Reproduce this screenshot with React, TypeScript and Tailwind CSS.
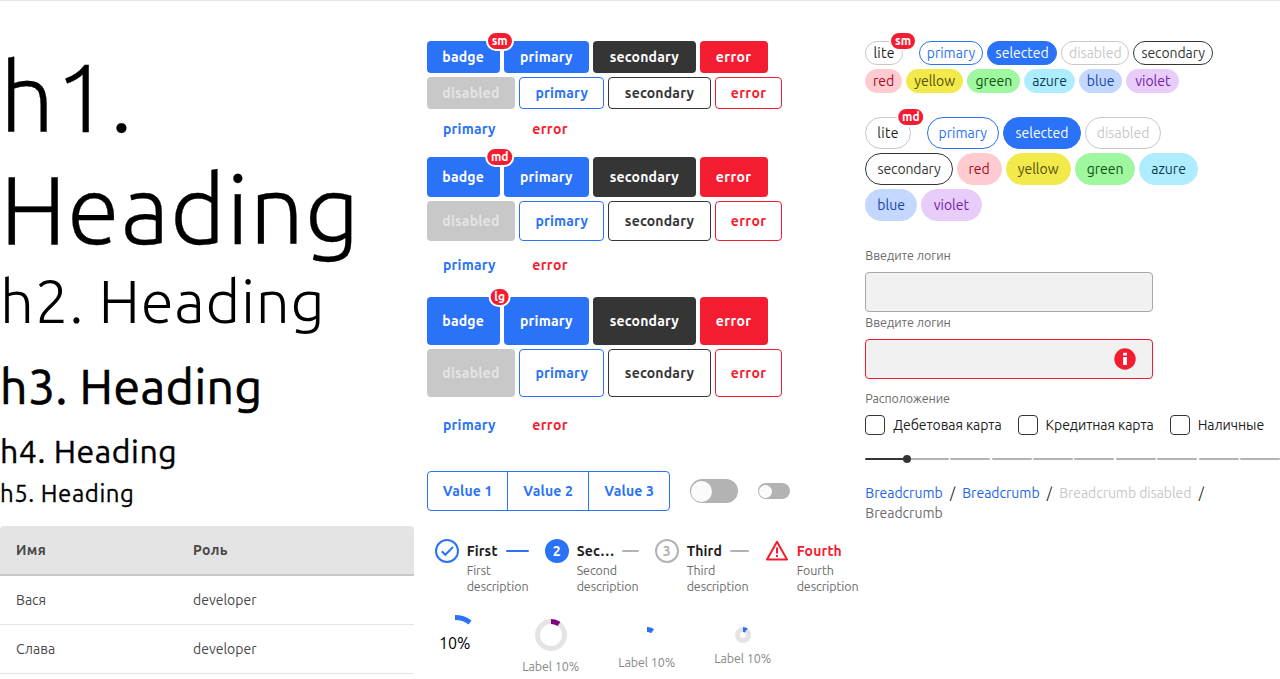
import type { ReactNode } from 'react';

const base = 'relative inline-flex items-center justify-center rounded font-bold';
const variants = {
  primary: 'bg-[#2a72f8] text-white',
  secondary: 'bg-[#353535] text-white',
  error: 'bg-[#f41c30] text-white tracking-[0.4px]',
  disabled: 'bg-[#c8c8c8] text-[#e4e4e4]',
  outlinePrimary: 'border border-[#2a72f8] text-[#2a72f8]',
  outlineSecondary: 'border border-[#353535] text-[#353535]',
  outlineError: 'border border-[#f41c30] text-[#f41c30] tracking-[0.4px]',
  linkPrimary: 'text-[#2a72f8]',
  linkError: 'text-[#f41c30] tracking-[0.4px]',
};

function Badge({ children, offset = 'top-0 left-full' }: { children: ReactNode; offset?: string }) {
  return (
    <span className={`absolute z-10 flex h-5 -translate-x-1/2 -translate-y-1/2 items-center rounded-full border-2 border-white bg-[#f41c30] px-1 text-xs leading-4 font-bold tracking-normal text-white ${offset}`}>
      {children}
    </span>
  );
}

function Button({ v, h, w, children, badge }: { v: keyof typeof variants; h: string; w: string; children: ReactNode; badge?: string }) {
  return (
    <button className={`${base} ${variants[v]} ${h} ${w}`}>
      {children}
      {badge && <Badge>{badge}</Badge>}
    </button>
  );
}

function ButtonSet({ h, badge }: { h: string; badge: string }) {
  return (
    <div className="flex flex-col gap-1 tracking-[0.2px]">
      <div className="flex gap-1">
        <Button v="primary" h={h} w="w-[73px]" badge={badge}>badge</Button>
        <Button v="primary" h={h} w="w-[85.4px]">primary</Button>
        <Button v="secondary" h={h} w="w-[102.6px]">secondary</Button>
        <Button v="error" h={h} w="w-[68px]">error</Button>
      </div>
      <div className="flex gap-1">
        <Button v="disabled" h={h} w="w-[88.6px]">disabled</Button>
        <Button v="outlinePrimary" h={h} w="w-[85px]">primary</Button>
        <Button v="outlineSecondary" h={h} w="w-[102.5px]">secondary</Button>
        <Button v="outlineError" h={h} w="w-[67.6px]">error</Button>
      </div>
      <div className="flex gap-1">
        <Button v="linkPrimary" h={h} w="w-[85.4px]">primary</Button>
        <Button v="linkError" h={h} w="w-[68px]">error</Button>
      </div>
    </div>
  );
}

const chips = [
  { name: 'lite', sm: 'w-[37.7px]', md: 'w-[45.5px]', color: 'border-[#c8c8c8] text-[#1d1d1d] tracking-[0.3px]' },
  { name: 'primary', sm: 'w-[64px]', md: 'w-[72px]', color: 'border-[#2a72f8] text-[#2a72f8]' },
  { name: 'selected', sm: 'w-[70.3px]', md: 'w-[78.3px]', color: 'border-[#2a72f8] bg-[#2a72f8] text-white' },
  { name: 'disabled', sm: 'w-[68px]', md: 'w-[76px]', color: 'border-[#c8c8c8] text-[#c8c8c8]' },
  { name: 'secondary', sm: 'w-[79.7px]', md: 'w-[87.5px]', color: 'border-[#353535] text-[#353535] tracking-[-0.1px]' },
  { name: 'red', sm: 'w-[36.7px]', md: 'w-[44.7px]', color: 'border-[#ffcad0] bg-[#ffcad0] text-[#a30b1a]' },
  { name: 'yellow', sm: 'w-[57.3px]', md: 'w-[65.3px]', color: 'border-[#f2e94a] bg-[#f2e94a] text-[#524e04]' },
  { name: 'green', sm: 'w-[53px]', md: 'w-[60.5px]', color: 'border-[#9ff79f] bg-[#9ff79f] text-[#0b520b]' },
  { name: 'azure', sm: 'w-[50.5px]', md: 'w-[58.5px]', color: 'border-[#aeecff] bg-[#aeecff] text-[#083c4b]' },
  { name: 'blue', sm: 'w-[43.7px]', md: 'w-[51.7px]', color: 'border-[#c3d7ff] bg-[#c3d7ff] text-[#1546a5]' },
  { name: 'violet', sm: 'w-[52.7px]', md: 'w-[60.7px]', color: 'border-[#e8ccfa] bg-[#e8ccfa] text-[#7221a7]' },
];

function Chips({ size }: { size: 'sm' | 'md' }) {
  return (
    <div className="flex w-[360px] flex-wrap gap-1">
      {chips.map((c) => (
        <span key={c.name} className={`relative inline-flex items-center justify-center rounded-full border ${size === 'sm' ? 'h-6' : 'h-8'} ${c[size]} ${c.color} ${c.name === 'lite' ? 'mr-3' : ''}`}>
          {c.name}
          {c.name === 'lite' && <Badge offset="-top-px left-[calc(100%+1px)]">{size}</Badge>}
        </span>
      ))}
    </div>
  );
}

function Step({ icon, title, text, line, color = 'text-[#1d1d1d]' }: { icon: ReactNode; title: string; text: string; line?: string; color?: string }) {
  return (
    <div className="flex gap-2">
      {icon}
      <div className="w-[62px]">
        <div className="flex h-6 items-center gap-2">
          <span className={`shrink-0 font-bold tracking-[0.15px] ${color}`}>{title}</span>
          {line && <span className={`h-0.5 min-w-4 flex-1 rounded-full ${line}`} />}
        </div>
        <p className="-mt-px text-[12.5px] leading-4 tracking-[-0.1px] text-[#6b6b6b]">{text}<br />description</p>
      </div>
    </div>
  );
}

function Ring({ size, color, track }: { size: number; color: string; track?: boolean }) {
  const r = size / 2 - 2.5;
  const c = 2 * Math.PI * r;
  return (
    <svg width={size} height={size} fill="none" strokeWidth="5" className="block">
      {track && <circle cx={size / 2} cy={size / 2} r={r} stroke="#e4e4e4" />}
      <circle cx={size / 2} cy={size / 2} r={r} stroke={color} strokeDasharray={`${c / 10} ${c}`} transform={`rotate(-90 ${size / 2} ${size / 2})`} />
    </svg>
  );
}

function Check({ children }: { children: ReactNode }) {
  return (
    <label className="flex items-center gap-2 tracking-[-0.08px] whitespace-nowrap">
      <span className="size-5 rounded border border-[#353535]" />
      {children}
    </label>
  );
}

export default function App() {
  return (
    <div className="h-[679px] overflow-hidden border-t border-[#e4e4e4] bg-white font-['Ubuntu','Open_Sans',sans-serif] text-sm leading-5 text-[#1d1d1d]">
      <div className="grid grid-cols-[414px_426px_414.67px] gap-x-[12.66px]">
        <section className="pt-10 text-black">
          <h1 className="text-[96px] leading-[112px] font-light tracking-[0.75px] [-webkit-text-stroke:0.3px_black]">h1. Heading</h1>
          <h2 className="text-[60px] leading-[72px] font-light tracking-[0.7px]">h2. Heading</h2>
          <h3 className="mt-[21px] text-[48px] leading-[56px] tracking-[0.55px] [-webkit-text-stroke:0.7px_black]">h3. Heading</h3>
          <h4 className="mt-[17px] text-[32px] leading-[40px] tracking-[0.55px] [-webkit-text-stroke:0.4px_black]">h4. Heading</h4>
          <h5 className="mt-[7px] text-[24px] leading-[32px] tracking-[0.55px] [-webkit-text-stroke:0.3px_black]">h5. Heading</h5>
          <div className="mt-[16px] text-[#484848]">
            <div className="flex h-[50px] items-center rounded-t border-b-2 border-[#c8c8c8] bg-[#e4e4e4] px-4 font-bold tracking-[0.35px]">
              <span className="w-[177px]">Имя</span><span>Роль</span>
            </div>
            <div className="flex h-[49px] items-center border-b border-[#e4e4e4] px-4">
              <span className="w-[177px]">Вася</span><span>developer</span>
            </div>
            <div className="flex h-[49px] items-center border-b border-[#e4e4e4] px-4">
              <span className="w-[177px]">Слава</span><span>developer</span>
            </div>
          </div>
        </section>

        <section className="pt-10">
          <div className="flex flex-col gap-3">
            <ButtonSet h="h-8" badge="sm" />
            <ButtonSet h="h-10" badge="md" />
            <ButtonSet h="h-12" badge="lg" />
          </div>
          <div className="mt-[22px] flex h-10 items-center">
            <div className="flex h-10 rounded border border-[#2a72f8] font-bold tracking-[0.15px] text-[#2a72f8]">
              <button className="w-20 border-r border-[#2a72f8] pl-px">Value 1</button>
              <button className="w-[81px] border-r border-[#2a72f8] pl-px">Value 2</button>
              <button className="w-20 pl-px">Value 3</button>
            </div>
            <span className="ml-5 flex h-6 w-12 items-center rounded-full bg-[#b3b3b3] p-px"><i className="size-[21px] rounded-full bg-[#fbfbfb]" /></span>
            <span className="ml-5 flex h-4 w-8 items-center rounded-full bg-[#b3b3b3] p-px"><i className="size-[13px] rounded-full bg-[#fbfbfb]" /></span>
          </div>
          <div className="mt-7 flex h-14 gap-4 pl-2">
            <Step
              title="First" text="First" line="bg-[#2a72f8]"
              icon={
                <svg width="24" height="24" fill="none" stroke="#2a72f8" strokeWidth="2" className="shrink-0">
                  <circle cx="12" cy="12" r="11" />
                  <path d="M6.7 12.2 10.3 15.8 18 8" />
                </svg>
              }
            />
            <Step title="Sec…" text="Second" line="bg-[#b3b3b3]"
              icon={<span className="flex size-6 shrink-0 items-center justify-center rounded-full bg-[#2a72f8] font-bold text-white">2</span>} />
            <Step title="Third" text="Third" line="bg-[#b3b3b3]"
              icon={<span className="flex size-6 shrink-0 items-center justify-center rounded-full border-2 border-[#b3b3b3] font-bold text-[#b3b3b3]">3</span>} />
            <Step title="Fourth" text="Fourth" color="text-[#f41c30]"
              icon={
                <svg width="24" height="24" fill="none" stroke="#f41c30" strokeWidth="2" strokeLinejoin="round" className="shrink-0">
                  <path d="M12 2.8 22 20.5H2Z M12 8.5v6 M12 16v2" />
                </svg>
              }
            />
          </div>
          <div className="mt-4 flex text-[12.5px] leading-4 tracking-[-0.1px] text-[#888]">
            <div className="w-[56px] pt-1">
              <div className="grid place-items-center [&>*]:[grid-area:1/1]">
                <Ring size={56} color="#2a72f8" />
                <span className="text-base tracking-normal text-black">10%</span>
              </div>
            </div>
            <div className="ml-10 flex w-14 flex-col items-center gap-[7px] pt-2 whitespace-nowrap"><Ring size={32} color="#800080" track />Label 10%</div>
            <div className="ml-10 flex w-14 flex-col items-center gap-[3px] pt-4 whitespace-nowrap"><Ring size={24} color="#2a72f8" />Label 10%</div>
            <div className="ml-10 flex w-14 flex-col items-center gap-[7px] pt-4 whitespace-nowrap"><Ring size={16} color="#2a72f8" track />Label 10%</div>
          </div>
        </section>

        <section className="pt-10">
          <Chips size="sm" />
          <div className="mt-6"><Chips size="md" /></div>
          <div className="mt-[26px] text-[12.5px] leading-4 tracking-[-0.05px] text-[#6b6b6b]">
            <label className="block">Введите логин</label>
            <div className="mt-[9px] h-10 w-72 rounded border border-[#a8a8a8] bg-[#f1f1f1]" />
            <label className="mt-[2px] block">Введите логин</label>
            <div className="mt-[9px] flex h-10 w-72 items-center justify-end rounded border border-[#f41c30] bg-[#f1f1f1] pr-4">
              <svg width="22" height="22">
                <circle cx="11" cy="11" r="10.7" fill="#f41c30" />
                <path d="M9.1 4.8h3.8v2.8H9.1zM9.1 9h3.8v8H9.1z" fill="#fff" />
              </svg>
            </div>
          </div>
          <p className="mt-[11px] text-[12.5px] leading-4 tracking-[-0.15px] text-[#6b6b6b]">Расположение</p>
          <div className="mt-[9px] flex gap-4">
            <Check>Дебетовая карта</Check>
            <Check>Кредитная карта</Check>
            <Check>Наличные</Check>
          </div>
          <div className="relative mt-[23px] flex h-0.5 gap-[1.5px]">
            {Array.from({ length: 10 }, (_, i) => (
              <span key={i} className={`rounded-full ${i === 0 ? 'w-[42px] bg-[#353535]' : 'flex-1 bg-[#b3b3b3]'}`} />
            ))}
            <i className="absolute -top-[3px] left-[37.5px] size-2 rounded-full bg-[#353535]" />
          </div>
          <nav className="mt-[23px] flex w-[360px] flex-wrap gap-x-[7.2px]">
            <a className="text-[#2264e5]">Breadcrumb</a><span>/</span>
            <a className="text-[#2264e5]">Breadcrumb</a><span>/</span>
            <a className="tracking-[-0.05px] text-[#c8c8c8]">Breadcrumb disabled</a><span>/</span>
            <a className="text-[#6b6b6b]">Breadcrumb</a>
          </nav>
        </section>
      </div>
    </div>
  );
}
